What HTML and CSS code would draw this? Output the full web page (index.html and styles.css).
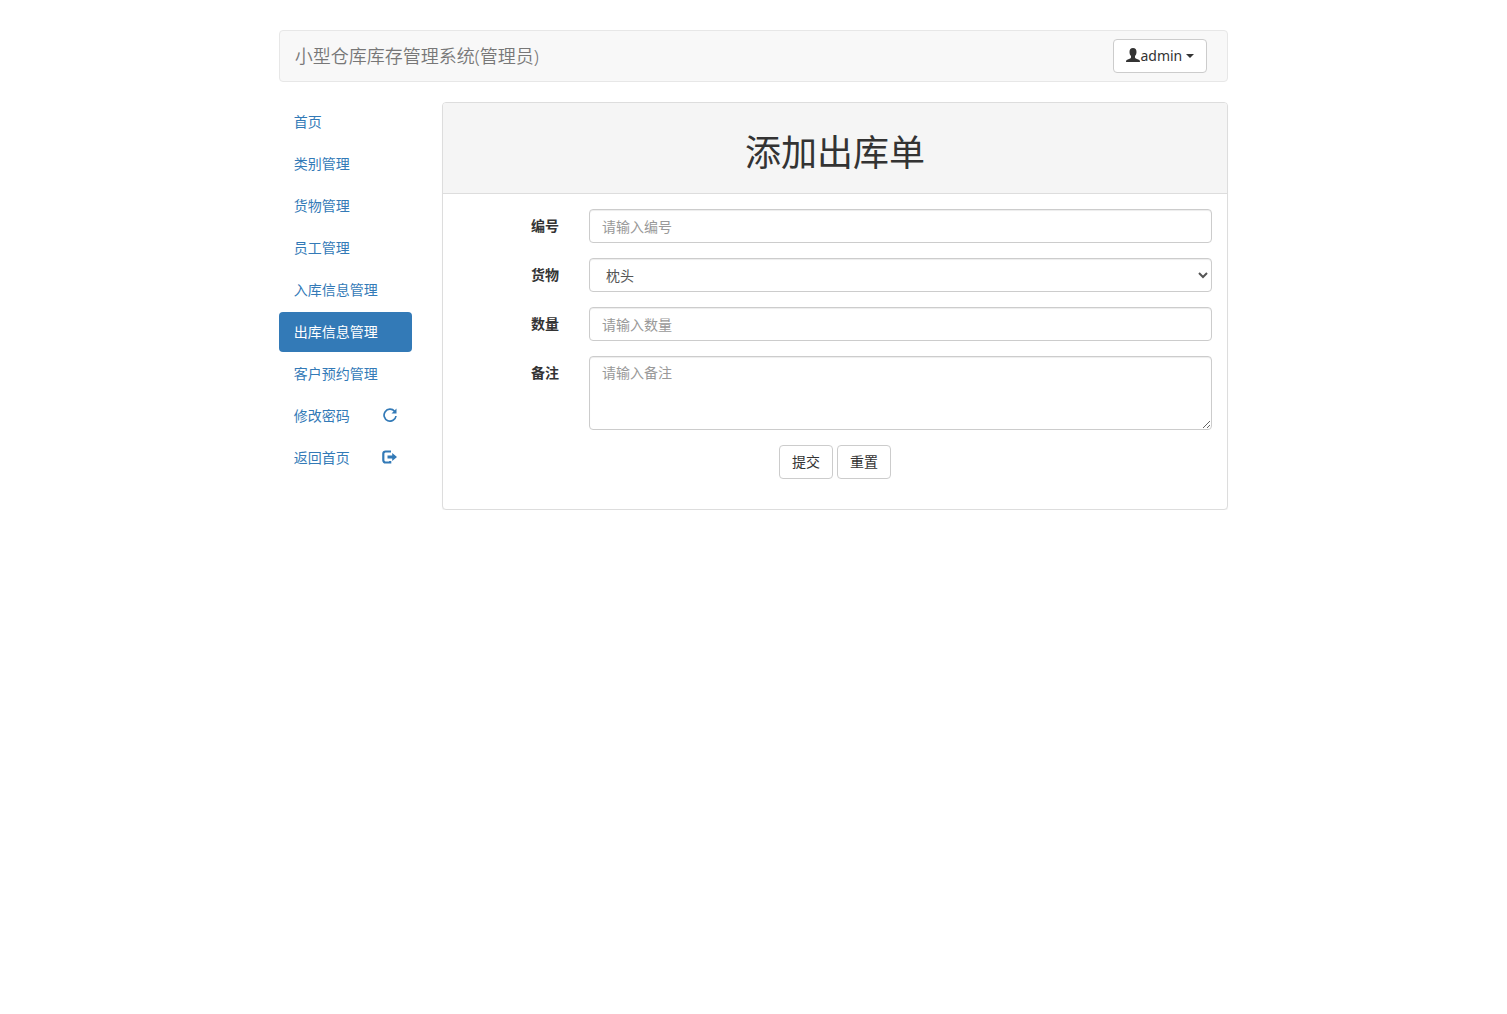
FILE: index.html
```html
<!DOCTYPE html>
<html lang="zh-CN">
<head>
  <meta charset="utf-8">
  <meta name="viewport" content="width=device-width, initial-scale=1">
  <title>添加出库单</title>
  <link rel="stylesheet" href="styles.css">
</head>
<body>
  <div class="container">
    <header class="navbar">
      <span class="navbar-brand">小型仓库库存管理系统(管理员)</span>
      <button type="button" class="btn user-menu">
        <svg class="icon" viewBox="0 0 14 14" aria-hidden="true"><path d="M7 0C9.300 0 10.500 1.600 10.500 4c0 1.800-.7 3.200-1.500 4.100v1.300c0 .5 .3 .8 .8 1l3 1.300c.8 .4 1.200 1 1.200 2.300H0c0-1.300 .4-1.900 1.200-2.300l3-1.300c.5-.2 .8-.5 .8-1V8.100C4.200 7.200 3.500 5.800 3.500 4 3.500 1.600 4.700 0 7 0z"/></svg>
        <span>admin</span>
        <span class="caret"></span>
      </button>
    </header>
    <div class="columns">
      <nav class="sidebar">
        <a class="nav-link" href="#">首页</a>
        <a class="nav-link" href="#">类别管理</a>
        <a class="nav-link" href="#">货物管理</a>
        <a class="nav-link" href="#">员工管理</a>
        <a class="nav-link" href="#">入库信息管理</a>
        <a class="nav-link active" href="#">出库信息管理</a>
        <a class="nav-link" href="#">客户预约管理</a>
        <a class="nav-link" href="#">修改密码
          <svg class="icon" viewBox="0 0 14 14" aria-hidden="true"><path d="M11.600 3.200A6 6 0 1 0 13 8" fill="none" stroke="currentColor" stroke-width="1.700"/><path d="M13.500 .5V5.500H8.500z"/></svg>
        </a>
        <a class="nav-link" href="#">返回首页
          <svg class="icon icon-exit" viewBox="0 0 15 14" aria-hidden="true"><path d="M9 1.500H3.500a2.200 2.200 0 0 0-2.200 2.200v6.600a2.200 2.200 0 0 0 2.200 2.200H8.200V11" fill="none" stroke="currentColor" stroke-width="2.200"/><path d="M5.500 5.500h4.700V3L15 7l-4.800 4V8.500H5.500z"/></svg>
        </a>
      </nav>
      <main class="panel">
        <div class="panel-heading"><h1>添加出库单</h1></div>
        <form class="panel-body">
          <div class="form-group">
            <label for="code">编号</label>
            <input class="form-control" id="code" type="text" placeholder="请输入编号">
          </div>
          <div class="form-group">
            <label for="goods">货物</label>
            <select class="form-control" id="goods"><option>枕头</option></select>
          </div>
          <div class="form-group">
            <label for="amount">数量</label>
            <input class="form-control" id="amount" type="text" placeholder="请输入数量">
          </div>
          <div class="form-group">
            <label for="remark">备注</label>
            <textarea class="form-control" id="remark" rows="3" placeholder="请输入备注"></textarea>
          </div>
          <div class="form-actions">
            <button type="submit" class="btn">提交</button>
            <button type="reset" class="btn">重置</button>
          </div>
        </form>
      </main>
    </div>
  </div>
</body>
</html>
```
FILE: styles.css
```css
*,
*::before,
*::after {
  box-sizing: border-box;
}

body {
  margin: 0;
  padding-top: 30px;
  background: #fff;
  color: #333;
  font-family: "Noto Sans", "Noto Sans CJK SC", sans-serif;
  font-size: 14px;
  line-height: 20px;
}

.container {
  width: 65%;
  margin: 0 auto;
  padding: 0 15px;
}

.navbar {
  display: flex;
  align-items: center;
  justify-content: space-between;
  min-height: 52px;
  margin-bottom: 20px;
  padding: 0 20px 0 15px;
  border: 1px solid #e7e7e7;
  border-radius: 4px;
  background: #f8f8f8;
}

.navbar-brand {
  color: #777;
  font-size: 18px;
  font-weight: 350;
}

.btn {
  padding: 6px 12px;
  border: 1px solid #ccc;
  border-radius: 4px;
  background: #fff;
  color: #333;
  font: inherit;
  cursor: pointer;
}

.user-menu {
  display: flex;
  align-items: center;
}

.icon {
  flex: none;
  width: 14px;
  height: 14px;
  fill: currentColor;
}

.user-menu .icon,
.nav-link .icon {
  margin-bottom: 2px;
}

.icon-exit {
  width: 15px;
}

.caret {
  margin-left: 4px;
  border-top: 4px solid;
  border-right: 4px solid transparent;
  border-left: 4px solid transparent;
}

.columns {
  display: grid;
  grid-template-columns: minmax(0, 1fr) minmax(0, 5.9fr);
  gap: 30px;
  align-items: start;
}

.sidebar {
  display: flex;
  flex-direction: column;
  gap: 2px;
}

.nav-link {
  display: flex;
  align-items: center;
  justify-content: space-between;
  padding: 10px 15px;
  border-radius: 4px;
  color: #337ab7;
  text-decoration: none;
  white-space: nowrap;
}

.nav-link.active {
  background: #337ab7;
  color: #fff;
}

.panel {
  border: 1px solid #ddd;
  border-radius: 4px;
  background: #fff;
  box-shadow: 0 1px 1px rgba(0, 0, 0, .05);
}

.panel-heading {
  padding: 30px 15px 20px;
  border-bottom: 1px solid #ddd;
  border-radius: 3px 3px 0 0;
  background: #f5f5f5;
  text-align: center;
}

.panel-heading h1 {
  margin: 0;
  font-size: 36px;
  font-weight: 400;
  line-height: 40px;
}

.panel-body {
  display: flex;
  flex-direction: column;
  gap: 15px;
  padding: 15px 15px 30px;
}

.form-group {
  display: grid;
  grid-template-columns: 101fr 623fr;
  gap: 30px;
  align-items: start;
}

.form-group label {
  padding-top: 7px;
  font-weight: 700;
  text-align: right;
}

.form-control {
  display: block;
  width: 100%;
  height: 34px;
  margin: 0;
  padding: 6px 12px;
  border: 1px solid #ccc;
  border-radius: 4px;
  background: #fff;
  box-shadow: inset 0 1px 1px rgba(0, 0, 0, .075);
  color: #555;
  font: inherit;
}

.form-control::placeholder {
  color: #999;
  opacity: 1;
}

textarea.form-control {
  height: auto;
  resize: vertical;
}

.form-actions {
  display: flex;
  justify-content: center;
  gap: 4px;
}
```
